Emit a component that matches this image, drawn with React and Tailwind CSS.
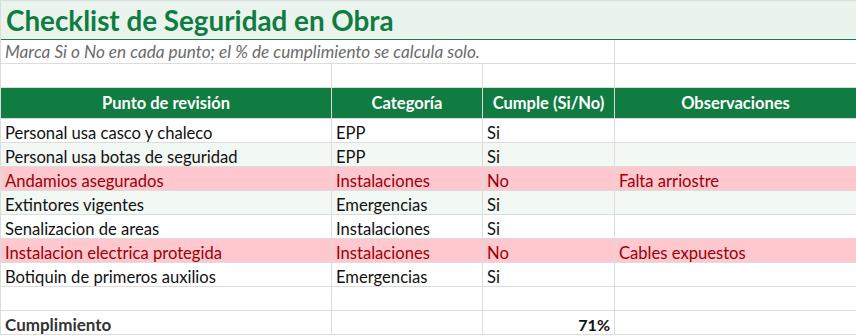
const rows = [
  { punto: "Personal usa casco y chaleco", cat: "EPP", ok: "Si", obs: "", bg: "bg-white" },
  { punto: "Personal usa botas de seguridad", cat: "EPP", ok: "Si", obs: "", bg: "bg-[#f2f8f4]" },
  { punto: "Andamios asegurados", cat: "Instalaciones", ok: "No", obs: "Falta arriostre", bg: "bg-[#ffc7ce]" },
  { punto: "Extintores vigentes", cat: "Emergencias", ok: "Si", obs: "", bg: "bg-[#f2f8f4]" },
  { punto: "Senalizacion de areas", cat: "Instalaciones", ok: "Si", obs: "", bg: "bg-white" },
  { punto: "Instalacion electrica protegida", cat: "Instalaciones", ok: "No", obs: "Cables expuestos", bg: "bg-[#ffc7ce]" },
  { punto: "Botiquin de primeros auxilios", cat: "Emergencias", ok: "Si", obs: "", bg: "bg-white" },
];

// excel-ish cell: bottom aligned text
const cell = "border-r border-b border-[#dcdcdc] px-[4px] flex items-end whitespace-nowrap overflow-hidden";

export default function App() {
  return (
    <div className="w-[856px] h-[336px] bg-white overflow-hidden font-['Lato','Open_Sans',sans-serif]">
      <div className="border-t border-l border-[#dcdcdc] grid grid-cols-[331px_151px_132px_242px]">
        {/* title */}
        <div className="col-span-4 h-[39px] bg-[#e9f4ec] border-b border-r border-b-[#1e7a45] border-r-[#dcdcdc] flex items-center px-[5px]">
          <h1 className="text-[27.8px] font-bold text-[#107c41] leading-none pt-[1px]">Checklist de Seguridad en Obra</h1>
        </div>

        {/* subtitle */}
        <div className={`${cell} col-span-3 h-[24px] italic text-[17.2px] leading-[18px] pb-[2px] text-[#6b6b6b]`}>
          Marca Si o No en cada punto; el % de cumplimiento se calcula solo.
        </div>
        <div className={`${cell} h-[24px]`}></div>

        {/* empty row */}
        <div className={`${cell} h-[24px]`}></div>
        <div className={`${cell} h-[24px]`}></div>
        <div className={`${cell} h-[24px]`}></div>
        <div className={`${cell} h-[24px]`}></div>

        {/* header */}
        {["Punto de revisión", "Categoría", "Cumple (Si/No)", "Observaciones"].map((h) => (
          <div key={h} className="h-[31px] bg-[#107c41] border-r border-b border-[#d9d9d9] flex items-center justify-center text-white font-bold text-[16.5px] leading-none">
            {h}
          </div>
        ))}

        {/* data */}
        {rows.map((r) => {
          const txt = r.ok === "No" ? "text-[#9c0006]" : "text-[#111]";
          return [r.punto, r.cat, r.ok, r.obs].map((v, i) => (
            <div key={r.punto + i} className={`${cell} ${r.bg} ${txt} h-[24px] text-[16.6px] leading-[18px]`}>
              {v}
            </div>
          ));
        })}

        {/* spacer */}
        <div className={`${cell} h-[24px]`}></div>
        <div className={`${cell} h-[24px]`}></div>
        <div className={`${cell} h-[24px]`}></div>
        <div className={`${cell} h-[24px]`}></div>

        {/* total */}
        <div className={`${cell} h-[24px] font-bold text-[17px] leading-[18px] text-[#333]`}>Cumplimiento</div>
        <div className={`${cell} h-[24px]`}></div>
        <div className={`${cell} h-[24px] justify-end font-bold text-[16px] leading-[18px] text-[#111]`}>71%</div>
        <div className={`${cell} h-[24px]`}></div>
      </div>
    </div>
  );
}
